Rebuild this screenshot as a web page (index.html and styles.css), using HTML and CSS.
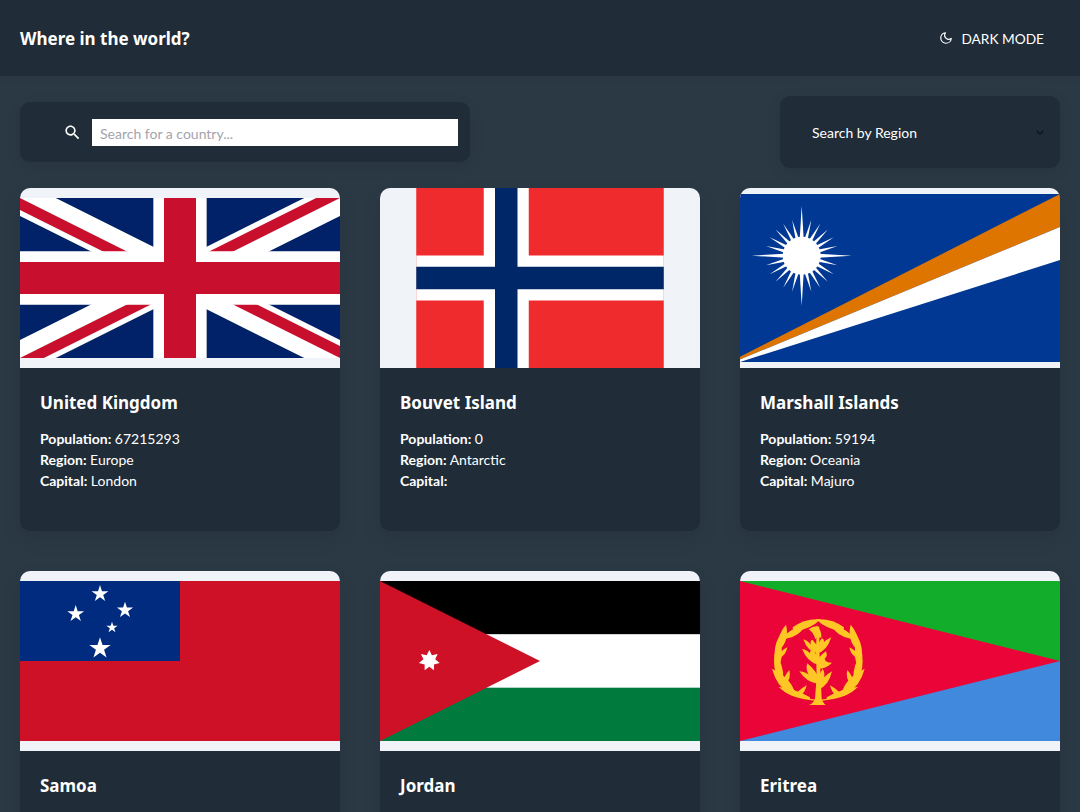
FILE: index.html
```html
<!DOCTYPE html>
<html lang="en">
<head>
<meta charset="utf-8">
<title>Where in the world?</title>
<link rel="stylesheet" href="styles.css">
</head>
<body>
<header class="topbar">
  <h1 class="brand">Where in the world?</h1>
  <button class="theme-toggle" type="button">
    <svg class="moon" viewBox="0 0 24 24"><path d="M21 12.79A9 9 0 1 1 11.21 3 7 7 0 0 0 21 12.79z"/></svg>
    <span>DARK MODE</span>
  </button>
</header>
<main class="page">
  <div class="toolbar">
    <div class="search">
      <svg class="search-icon" viewBox="0 0 24 24"><path d="M15.5 14h-.79l-.28-.27C15.41 12.59 16 11.11 16 9.5 16 5.91 13.09 3 9.5 3S3 5.91 3 9.5 5.91 16 9.5 16c1.61 0 3.09-.59 4.23-1.57l.27.28v.79l5 4.99L20.49 19l-4.99-5zm-6 0C7.01 14 5 11.99 5 9.5S7.01 5 9.5 5 14 7.01 14 9.5 11.99 14 9.5 14z"/></svg>
      <input class="search-input" type="text" placeholder="Search for a country...">
    </div>
    <div class="region">
      <select class="region-select">
        <option>Search by Region</option>
        <option>Africa</option>
        <option>Americas</option>
        <option>Asia</option>
        <option>Europe</option>
        <option>Oceania</option>
      </select>
      <svg class="chevron" viewBox="0 0 10 6"><path d="M1 1l4 4 4-4"/></svg>
    </div>
  </div>

  <section class="grid">
    <article class="card">
      <div class="flag-box">
        <svg class="flag" width="320" height="160" viewBox="0 0 60 30">
          <clipPath id="uk-diag"><path d="M30,15 h30 v15 z v15 h-30 z h-30 v-15 z v-15 h30 z"/></clipPath>
          <rect width="60" height="30" fill="#012169"/>
          <path d="M0,0 L60,30 M60,0 L0,30" stroke="#fff" stroke-width="6"/>
          <path d="M0,0 L60,30 M60,0 L0,30" clip-path="url(#uk-diag)" stroke="#c8102e" stroke-width="4"/>
          <path d="M30,0 v30 M0,15 h60" stroke="#fff" stroke-width="10"/>
          <path d="M30,0 v30 M0,15 h60" stroke="#c8102e" stroke-width="6"/>
        </svg>
      </div>
      <div class="card-body">
        <h2 class="name">United Kingdom</h2>
        <p class="fact"><b>Population:</b> 67215293</p>
        <p class="fact"><b>Region:</b> Europe</p>
        <p class="fact"><b>Capital:</b> London</p>
      </div>
    </article>

    <article class="card">
      <div class="flag-box">
        <svg class="flag" width="248" height="180" viewBox="0 0 22 16">
          <rect width="22" height="16" fill="#ef2b2d"/>
          <path d="M0,8 h22 M8,0 v16" stroke="#fff" stroke-width="4"/>
          <path d="M0,8 h22 M8,0 v16" stroke="#002868" stroke-width="2"/>
        </svg>
      </div>
      <div class="card-body">
        <h2 class="name">Bouvet Island</h2>
        <p class="fact"><b>Population:</b> 0</p>
        <p class="fact"><b>Region:</b> Antarctic</p>
        <p class="fact"><b>Capital:</b></p>
      </div>
    </article>

    <article class="card">
      <div class="flag-box">
        <svg class="flag" width="320" height="168" viewBox="0 0 320 168">
          <defs>
            <polygon id="ray-long" points="-3,0 0,-50 3,0"/>
            <polygon id="ray" points="-3,0 0,-37 3,0"/>
            <g id="ray-quarter">
              <use href="#ray-long"/>
              <use href="#ray" transform="rotate(15)"/>
              <use href="#ray" transform="rotate(30)"/>
              <use href="#ray" transform="rotate(45)"/>
              <use href="#ray" transform="rotate(60)"/>
              <use href="#ray" transform="rotate(75)"/>
            </g>
          </defs>
          <rect width="320" height="168" fill="#003893"/>
          <path d="M0,162.7 L320,0 V33 L0,165.5z" fill="#dd7500"/>
          <path d="M0,165.5 L320,33 V66 L0,168z" fill="#fff"/>
          <g transform="translate(61.7,61.7)" fill="#fff">
            <use href="#ray-quarter"/>
            <use href="#ray-quarter" transform="rotate(90)"/>
            <use href="#ray-quarter" transform="rotate(180)"/>
            <use href="#ray-quarter" transform="rotate(270)"/>
            <circle r="19"/>
          </g>
        </svg>
      </div>
      <div class="card-body">
        <h2 class="name">Marshall Islands</h2>
        <p class="fact"><b>Population:</b> 59194</p>
        <p class="fact"><b>Region:</b> Oceania</p>
        <p class="fact"><b>Capital:</b> Majuro</p>
      </div>
    </article>

    <article class="card">
      <div class="flag-box">
        <svg class="flag" width="320" height="160" viewBox="0 0 320 160">
          <rect width="320" height="160" fill="#ce1126"/>
          <rect width="160" height="80" fill="#002b7f"/>
          <defs><polygon id="star5" points="0,-1 .2245,-.309 .951,-.309 .3633,.118 .5878,.809 0,.382 -.5878,.809 -.3633,.118 -.951,-.309 -.2245,-.309"/></defs>
          <g fill="#fff">
            <use href="#star5" transform="translate(80,12.9) scale(8.85)"/>
            <use href="#star5" transform="translate(55.7,32.9) scale(8.85)"/>
            <use href="#star5" transform="translate(105,29.2) scale(8.5)"/>
            <use href="#star5" transform="translate(92,46.6) scale(5.9)"/>
            <use href="#star5" transform="translate(80,67.5) scale(11.2)"/>
          </g>
        </svg>
      </div>
      <div class="card-body">
        <h2 class="name">Samoa</h2>
      </div>
    </article>

    <article class="card">
      <div class="flag-box">
        <svg class="flag" width="320" height="160" viewBox="0 0 320 160">
          <rect width="320" height="53.4" fill="#000"/>
          <rect y="53.4" width="320" height="53.3" fill="#fff"/>
          <rect y="106.7" width="320" height="53.3" fill="#007a3d"/>
          <path d="M0,0 L160,80 L0,160z" fill="#ce1126"/>
          <polygon transform="translate(49.3,79.7)" fill="#fff" points="0,-10.7 2.6,-5.41 8.37,-6.67 5.85,-1.34 10.43,2.38 4.69,3.74 4.64,9.64 0,6 -4.64,9.64 -4.69,3.74 -10.43,2.38 -5.85,-1.34 -8.37,-6.67 -2.6,-5.41"/>
        </svg>
      </div>
      <div class="card-body">
        <h2 class="name">Jordan</h2>
      </div>
    </article>

    <article class="card">
      <div class="flag-box">
        <svg class="flag" width="320" height="160" viewBox="0 0 320 160">
          <rect width="320" height="80" fill="#12ad2b"/>
          <rect y="80" width="320" height="80" fill="#4189dd"/>
          <path d="M0,0 L320,80 L0,160z" fill="#ea0437"/>
          <g transform="translate(20,29) scale(.3333)" fill="#ffc726">
            <path d="M146,285 Q160,281 165,266 L170,200 L168,120 L170,58 L178,58 L178,120 L182,200 L185,266 Q190,281 198,285z"/>
            <path d="M146,58 Q160,46 178,50 Q178,78 166,88 Q160,66 146,58z"/>
            <path d="M166,78 Q176,60 170,46 Q186,62 184,84z"/>
            <path d="M174,130 Q144,128 130,88 Q146,94 152,104 Q150,88 158,90 Q172,104 176,118z"/>
            <path d="M172,130 Q200,124 214,82 Q198,90 192,96 Q192,84 184,86 Q172,102 170,118z"/>
            <path d="M174,164 Q142,156 126,116 Q146,122 150,130 Q150,116 160,120 Q172,136 176,150z"/>
            <path d="M174,176 Q200,176 216,158 Q196,158 194,146 Q204,140 198,124 Q174,140 172,158z"/>
            <path d="M174,222 Q138,216 118,184 Q138,186 146,194 Q136,176 142,160 Q170,184 176,205z"/>
            <path d="M174,240 Q206,228 216,184 Q200,194 192,202 Q196,190 188,176 Q172,202 172,222z"/>
            <g id="wreath-left">
              <path d="M176,272 C112,270 60,215 52,150 C48,105 75,70 130,42" fill="none" stroke="#ffc726" stroke-width="4"/>
              <path d="M150,262 Q110,238 56,230 Q85,262 150,270z"/>
              <path d="M105,250 Q95,205 36,176 Q50,230 90,250z"/>
              <path d="M70,210 Q72,160 44,132 Q36,178 58,208z"/>
              <path d="M60,165 Q72,120 58,78 Q38,112 45,160z"/>
              <path d="M56,122 Q90,92 78,44 Q54,70 50,116z"/>
              <path d="M78,86 Q118,80 134,48 Q96,54 72,78z"/>
              <path d="M100,66 Q152,58 182,28 Q135,24 98,52z"/>
              <path d="M118,262 Q136,246 140,226 Q116,240 104,256z"/>
              <path d="M78,222 Q94,204 88,180 Q72,198 70,216z"/>
              <path d="M56,146 Q78,136 82,112 Q62,122 52,140z"/>
            </g>
            <use href="#wreath-left" transform="translate(350,0) scale(-1,1)"/>
          </g>
        </svg>
      </div>
      <div class="card-body">
        <h2 class="name">Eritrea</h2>
      </div>
    </article>
  </section>
</main>
</body>
</html>
```
FILE: styles.css
```css
* {
  box-sizing: border-box;
}

html,
body {
  margin: 0;
  height: 100%;
  overflow: hidden;
}

body {
  background: #2b3945;
  color: #fff;
  font-family: Lato, "Noto Sans", sans-serif;
  font-size: 14px;
}

.topbar {
  display: flex;
  align-items: center;
  justify-content: space-between;
  height: 76px;
  padding: 0 36px 0 20px;
  background: #202c37;
  box-shadow: 0 2px 8px rgba(0, 0, 0, 0.04);
}

.brand {
  margin: 0;
  font-family: "Noto Sans", Lato, sans-serif;
  font-size: 17px;
  font-weight: 700;
}

.theme-toggle {
  display: flex;
  align-items: center;
  gap: 8px;
  padding: 0;
  border: 0;
  background: none;
  color: #fff;
  font: inherit;
  font-size: 13.7px;
}

.moon {
  width: 14px;
  height: 14px;
  fill: none;
  stroke: #fff;
  stroke-width: 2;
  stroke-linecap: round;
  stroke-linejoin: round;
}

.page {
  padding: 20px;
}

.toolbar {
  display: flex;
  align-items: center;
  justify-content: space-between;
  margin-bottom: 20px;
}

.search {
  display: flex;
  align-items: center;
  gap: 10px;
  width: 450px;
  height: 60px;
  padding: 0 12px 0 43px;
  border-radius: 10px;
  background: #202c37;
  box-shadow: 0 4px 16px rgba(0, 0, 0, 0.08);
}

.search-icon {
  flex: none;
  width: 19px;
  height: 19px;
  fill: #fff;
}

.search-input {
  flex: 1;
  height: 27px;
  padding: 2px 8px 0;
  border: 0;
  border-radius: 0;
  outline: 0;
  background: #fff;
  color: #202c37;
  font: inherit;
  font-size: 14px;
}

.search-input::placeholder {
  color: #a3a3ad;
  opacity: 1;
}

.region {
  position: relative;
  width: 280px;
  height: 72px;
}

.region-select {
  display: block;
  width: 100%;
  height: 100%;
  padding: 0 32px;
  border: 0;
  border-radius: 10px;
  outline: 0;
  appearance: none;
  background: #202c37;
  color: #fff;
  font: inherit;
  font-size: 14px;
  box-shadow: 0 4px 16px rgba(0, 0, 0, 0.08);
}

.chevron {
  position: absolute;
  top: 34px;
  right: 16px;
  width: 8px;
  height: 5px;
  fill: none;
  stroke: #0c1118;
  stroke-width: 1.6;
}

.grid {
  display: grid;
  grid-template-columns: repeat(3, 320px);
  gap: 40px;
}

.card {
  overflow: hidden;
  border-radius: 10px;
  background: #202c37;
  box-shadow: 0 8px 20px rgba(0, 0, 0, 0.08);
}

.flag-box {
  display: flex;
  align-items: center;
  justify-content: center;
  height: 180px;
  background: #f0f4f9;
}

.flag {
  display: block;
}

.card-body {
  height: 163px;
  padding: 21px 20px 20px;
}

.name {
  margin: 0 0 12px;
  font-family: "Noto Sans", Lato, sans-serif;
  font-size: 17px;
  line-height: 27px;
  font-weight: 700;
}

.fact {
  margin: 0;
  font-size: 14px;
  line-height: 21px;
}

.fact b {
  font-weight: 700;
}
```
